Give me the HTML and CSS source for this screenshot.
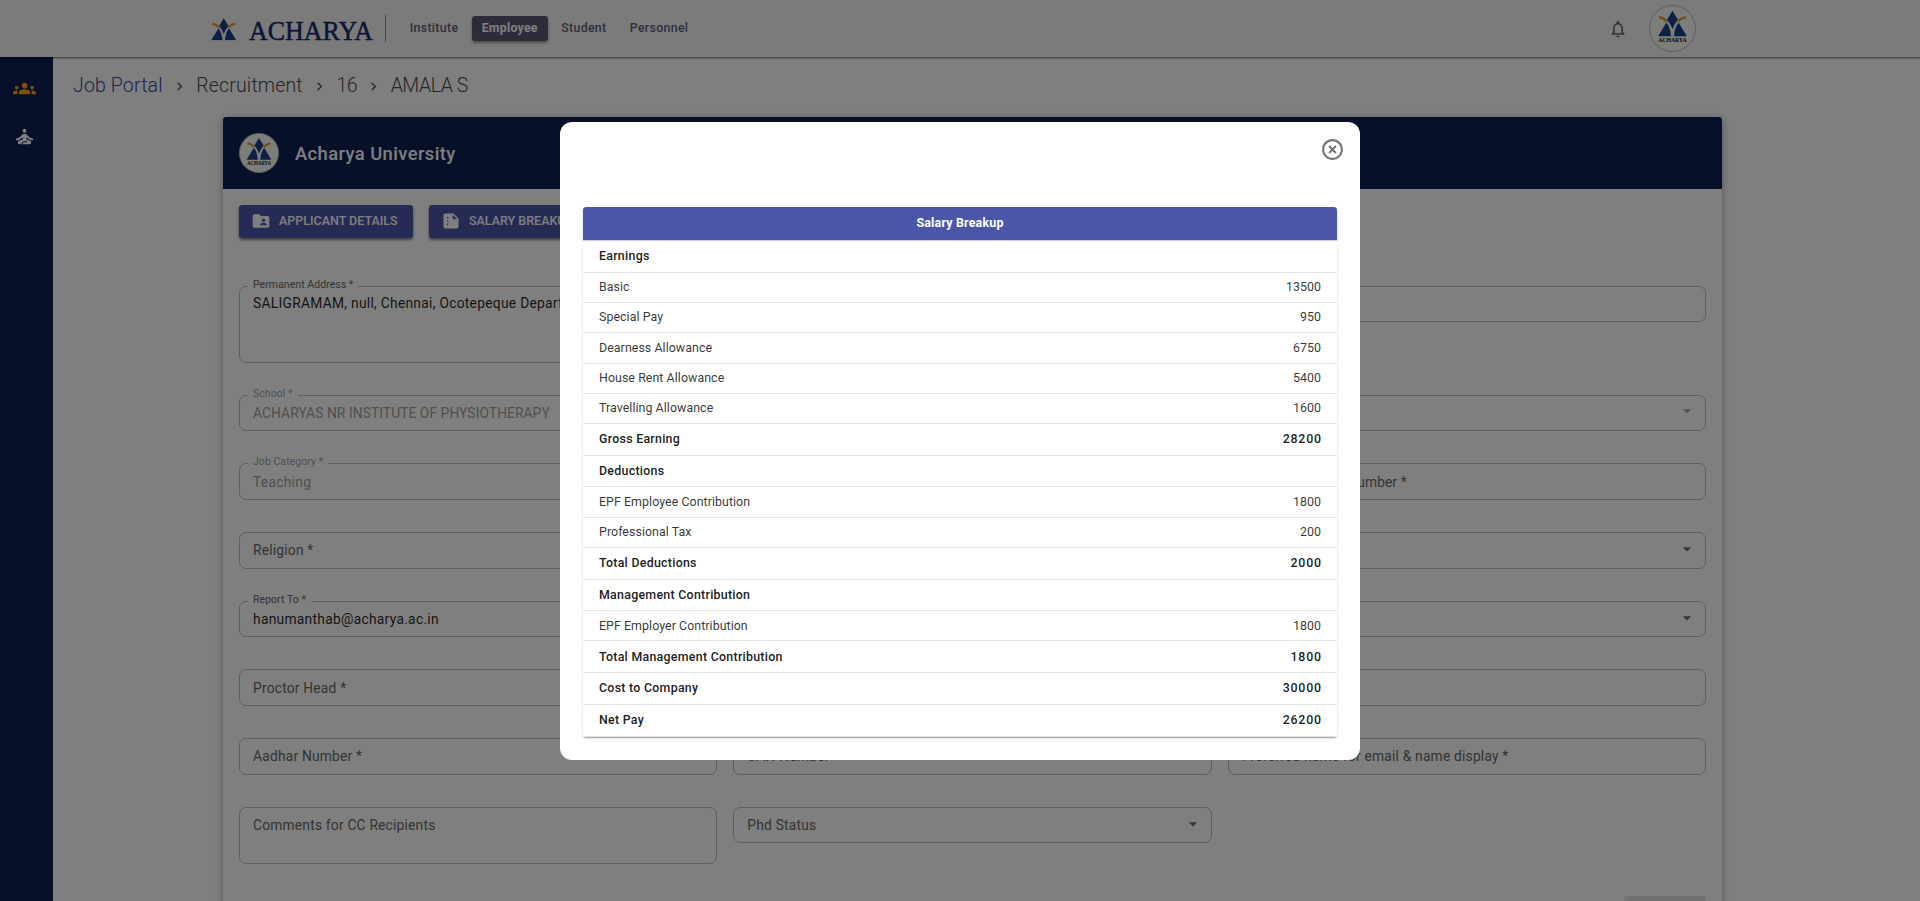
FILE: index.html
```html
<!DOCTYPE html>
<html lang="en">
<head>
<meta charset="utf-8">
<title>Acharya - Job Portal</title>
<link rel="stylesheet" href="styles.css">
</head>
<body>
<svg class="defs" width="0" height="0" aria-hidden="true">
  <symbol id="emblem" viewBox="9 5.6 29 26">
    <path class="em-blue" d="M23.5 5.8 29 14.8Q25.6 18.600 23.500 24Q21.400 18.600 18 14.800ZM17.400 17.400Q21.500 22.500 22 31.400H9ZM29.600 17.400Q25.500 22.500 25 31.400H38Z"/>
    <path class="em-gold" d="M10 12.400Q14.500 12.600 17.800 16.400M37 12.400Q32.500 12.600 29.200 16.400"/>
  </symbol>
  <symbol id="caret" viewBox="0 0 24 24"><path d="m7 10 5 5 5-5z"/></symbol>
</svg>

<header class="topbar">
  <div class="brand">
    <svg class="brand-mark" viewBox="9 5.600 29 26"><use href="#emblem" x="9" y="5.600" width="29" height="26"/></svg>
    <svg class="brand-word" viewBox="0 0 124 26"><text x="0" y="20.500" textLength="124" lengthAdjust="spacingAndGlyphs">ACHARYA</text></svg>
  </div>
  <nav class="topnav">
    <a class="nav-institute">Institute</a>
    <a class="nav-employee active">Employee</a>
    <a class="nav-student">Student</a>
    <a class="nav-personnel">Personnel</a>
  </nav>
  <div class="account">
    <svg class="bell" viewBox="0 0 24 24"><path d="M12 22c1.100 0 2-.9 2-2h-4c0 1.100.9 2 2 2m6-6v-5c0-3.070-1.630-5.640-4.500-6.320V4c0-.83-.67-1.500-1.500-1.500s-1.500.67-1.500 1.500v.68C7.640 5.360 6 7.920 6 11v5l-2 2v1h16v-1zm-2 1H8v-6c0-2.480 1.510-4.500 4-4.500s4 2.020 4 4.500z"/></svg>
    <svg class="avatar" viewBox="0 0 47 47">
      <circle class="seal-disc" cx="23.500" cy="23.500" r="23"/>
      <use href="#emblem" x="9" y="5.600" width="29" height="26"/>
      <text class="seal-text" x="9.300" y="37.400" textLength="28.400" lengthAdjust="spacingAndGlyphs">ACHARYA</text>
    </svg>
  </div>
</header>

<div class="layout">
  <aside class="sidebar">
    <svg class="side-icon current" viewBox="0 0 24 24"><path d="M12 12.750c1.630 0 3.070.39 4.240.9 1.080.48 1.760 1.560 1.760 2.730V18H6v-1.610c0-1.180.68-2.260 1.760-2.730 1.170-.52 2.610-.91 4.240-.91M4 13c1.100 0 2-.9 2-2s-.9-2-2-2-2 .9-2 2 .9 2 2 2m1.130 1.100c-.37-.06-.74-.1-1.130-.1-.99 0-1.930.21-2.780.58C.48 14.900 0 15.620 0 16.430V18h4.500v-1.610c0-.83.23-1.610.63-2.290M20 13c1.100 0 2-.9 2-2s-.9-2-2-2-2 .9-2 2 .9 2 2 2m4 3.430c0-.81-.48-1.530-1.220-1.850-.85-.37-1.790-.58-2.780-.58-.39 0-.76.04-1.130.1.4.68.63 1.460.63 2.290V18H24zM12 6c1.660 0 3 1.340 3 3s-1.340 3-3 3-3-1.340-3-3 1.340-3 3-3"/></svg>
    <svg class="side-icon" viewBox="0 0 24 24"><circle cx="12" cy="6" r="2"/><path d="M21 16v-2c-2.240 0-4.160-.96-5.600-2.680l-1.340-1.600c-.38-.46-.94-.72-1.530-.72h-1.050c-.6 0-1.160.26-1.540.72l-1.340 1.600C7.160 13.040 5.240 14 3 14v2c2.770 0 5.190-1.170 7-3.250V15l-3.880 1.550c-.67.27-1.120.93-1.120 1.660C5 19.200 5.800 20 6.790 20H9v-.5c0-1.380 1.120-2.500 2.500-2.500h3c.28 0 .5.22.5.5s-.22.5-.5.5h-3c-.83 0-1.500.67-1.500 1.500v.5h7.210c.99 0 1.790-.8 1.790-1.790 0-.73-.45-1.390-1.120-1.660L14 15v-2.250c1.810 2.080 4.230 3.250 7 3.250"/></svg>
  </aside>

  <main class="content">
    <nav class="crumbs">
      <a class="crumb-link">Job Portal</a>
      <svg class="chev" viewBox="0 0 24 24"><path d="M10 6 8.590 7.410 13.170 12l-4.580 4.590L10 18l6-6z"/></svg>
      <span>Recruitment</span>
      <svg class="chev" viewBox="0 0 24 24"><path d="M10 6 8.590 7.410 13.170 12l-4.580 4.590L10 18l6-6z"/></svg>
      <span class="crumb-id">16</span>
      <svg class="chev" viewBox="0 0 24 24"><path d="M10 6 8.590 7.410 13.170 12l-4.580 4.590L10 18l6-6z"/></svg>
      <span class="crumb-name">AMALA S</span>
    </nav>

    <section class="card">
      <div class="card-head">
        <svg class="card-seal" viewBox="0 0 47 47">
          <circle class="seal-disc" cx="23.500" cy="23.500" r="23"/>
          <use href="#emblem" x="9" y="5.600" width="29" height="26"/>
          <text class="seal-text" x="9.300" y="37.400" textLength="28.400" lengthAdjust="spacingAndGlyphs">ACHARYA</text>
        </svg>
        <h1>Acharya University</h1>
      </div>
      <div class="card-body">
        <div class="actions">
          <button class="btn btn-details"><svg viewBox="0 0 24 24"><path d="M20 6h-8l-2-2H4c-1.100 0-1.990.9-1.990 2L2 18c0 1.100.9 2 2 2h16c1.100 0 2-.9 2-2V8c0-1.100-.9-2-2-2m-5 3c1.100 0 2 .9 2 2s-.9 2-2 2-2-.9-2-2 .9-2 2-2m4 8h-8v-1c0-1.330 2.670-2 4-2s4 .67 4 2z"/></svg>APPLICANT DETAILS</button>
          <button class="btn btn-salary"><svg viewBox="0 0 24 24"><path d="M15 3H5c-1.100 0-1.990.9-1.990 2L3 19c0 1.100.89 2 1.990 2H19c1.100 0 2-.9 2-2V9zM8 17c-.55 0-1-.45-1-1s.45-1 1-1 1 .45 1 1-.45 1-1 1m0-4c-.55 0-1-.45-1-1s.45-1 1-1 1 .45 1 1-.45 1-1 1m0-4c-.55 0-1-.45-1-1s.45-1 1-1 1 .45 1 1-.45 1-1 1m6 1V4.500l5.500 5.500z"/></svg>SALARY BREAKUP</button>
        </div>

        <form class="fields">
          <div class="field tall"><label>Permanent Address *</label><span class="value">SALIGRAMAM, null, Chennai, Ocotepeque Department</span></div>
          <div class="field tall"></div>
          <div class="field"></div>

          <div class="field off"><label>School *</label><span class="value caps">ACHARYAS NR INSTITUTE OF PHYSIOTHERAPY</span></div>
          <div class="field off"></div>
          <div class="field off"><svg class="caret"><use href="#caret"/></svg></div>

          <div class="field off"><label>Job Category *</label><span class="value">Teaching</span></div>
          <div class="field"></div>
          <div class="field"><span class="hint snug">Alternate Mobile Number *</span></div>

          <div class="field"><span class="hint">Religion *</span></div>
          <div class="field"></div>
          <div class="field"><svg class="caret"><use href="#caret"/></svg></div>

          <div class="field"><label>Report To *</label><span class="value">hanumanthab@acharya.ac.in</span></div>
          <div class="field"></div>
          <div class="field"><svg class="caret"><use href="#caret"/></svg></div>

          <div class="field"><span class="hint">Proctor Head *</span></div>
          <div class="field"></div>
          <div class="field"></div>

          <div class="field"><span class="hint">Aadhar Number *</span></div>
          <div class="field"><span class="hint">UAN Number</span></div>
          <div class="field"><span class="hint">Preferred name for email &amp; name display *</span></div>

          <div class="field comments"><span class="hint">Comments for CC Recipients</span></div>
          <div class="field"><span class="hint">Phd Status</span><svg class="caret"><use href="#caret"/></svg></div>
        </form>
        <div class="submit-row"><button class="submit" disabled></button></div>
      </div>
    </section>
  </main>
</div>

<div class="backdrop">
  <div class="modal" role="dialog">
    <div class="modal-head">
      <svg class="close" viewBox="0 0 24 24"><path d="M14.590 8 12 10.590 9.410 8 8 9.410 10.590 12 8 14.590 9.410 16 12 13.410 14.590 16 16 14.590 13.410 12 16 9.410zM12 2C6.470 2 2 6.470 2 12s4.470 10 10 10 10-4.470 10-10S17.530 2 12 2m0 18c-4.410 0-8-3.590-8-8s3.590-8 8-8 8 3.590 8 8-3.590 8-8 8"/></svg>
    </div>
    <div class="sheet">
      <div class="sheet-title">Salary Breakup</div>
      <div class="line total"><span>Earnings</span></div>
      <div class="line"><span>Basic</span><span>13500</span></div>
      <div class="line"><span>Special Pay</span><span>950</span></div>
      <div class="line"><span>Dearness Allowance</span><span>6750</span></div>
      <div class="line"><span>House Rent Allowance</span><span>5400</span></div>
      <div class="line"><span>Travelling Allowance</span><span>1600</span></div>
      <div class="line total"><span>Gross Earning</span><span class="sum">28200</span></div>
      <div class="line total"><span>Deductions</span></div>
      <div class="line"><span>EPF Employee Contribution</span><span>1800</span></div>
      <div class="line"><span>Professional Tax</span><span>200</span></div>
      <div class="line total"><span>Total Deductions</span><span class="sum">2000</span></div>
      <div class="line total"><span>Management Contribution</span></div>
      <div class="line"><span>EPF Employer Contribution</span><span>1800</span></div>
      <div class="line total"><span>Total Management Contribution</span><span class="sum">1800</span></div>
      <div class="line total"><span>Cost to Company</span><span class="sum">30000</span></div>
      <div class="line total"><span>Net Pay</span><span class="sum">26200</span></div>
    </div>
  </div>
</div>
</body>
</html>
```
FILE: styles.css
```css
* { box-sizing: border-box; }
body {
  margin: 0;
  height: 901px;
  overflow: hidden;
  background: #fff;
  color: rgba(0, 0, 0, .87);
  font-family: Roboto, "Liberation Sans", sans-serif;
  font-size: 13.8px;
}
.defs { position: absolute; }
.em-blue { fill: #1c3f8f; }
.em-gold { fill: none; stroke: #e8992a; stroke-width: 2.4; }
.brand-mark { --mark: #1b2a6b; }
.seal-disc { fill: #fbfaf5; stroke: #bdbdbd; stroke-width: 1; }
.seal-text { font: 700 6.6px "Liberation Serif", serif; fill: #111; }

/* top bar */
.topbar {
  position: relative;
  z-index: 2;
  display: flex;
  height: 57px;
  padding: 0 224px 0 211px;
  background: #f7f7f7;
  box-shadow: 0 1px 2px rgba(0, 0, 0, .6);
}
.brand {
  display: flex;
  width: 175px;
  height: 27px;
  margin-top: 15px;
  border-right: 1px solid #8f8f8f;
}
.brand-mark { width: 25.5px; height: 22.5px; margin-top: 3px; }
.brand-mark use { fill: var(--mark); }
.brand-word { width: 124px; height: 26px; margin: 4px 0 0 12.5px; overflow: visible; }
.brand-word text {
  font: 400 26.500px "Liberation Serif", serif;
  fill: #1b2a6b;
  stroke: #1b2a6b;
  stroke-width: .5;
}
.topnav { display: flex; gap: 2.700px; height: 25px; margin: 16px auto 0 13px; }
.topnav a {
  line-height: 24px;
  text-align: center;
  font-size: 12.3px;
  font-weight: 500;
  letter-spacing: .35px;
  color: #5f5c78;
  border-radius: 3.200px;
}
.nav-institute { width: 70px; }
.nav-employee { width: 76px; }
.nav-student { width: 67px; }
.nav-personnel { width: 78px; }
.topnav a.active {
  color: #fff;
  font-weight: 700;
  letter-spacing: .25px;
  background: #5b5876;
  box-shadow: 0 2px 3px rgba(0, 0, 0, .4);
}
.account { display: flex; align-items: center; gap: 21px; }
.bell { width: 20px; height: 20px; fill: #666; }
.avatar { width: 47px; height: 47px; }

/* page frame */
.layout { display: flex; height: 844px; }
.sidebar {
  display: flex;
  flex-direction: column;
  gap: 25px;
  width: 53px;
  padding: 20px 0 0 13px;
  background: #0f2052;
}
.side-icon { width: 23px; height: 23px; fill: #fff; }
.side-icon.current { fill: #f9a011; }
.content { flex: 1; padding-left: 20px; }
.crumbs {
  display: flex;
  align-items: center;
  height: 24px;
  margin: 16px 0 20px;
  font-size: 19.500px;
  font-weight: 300;
  letter-spacing: .15px;
  color: #4a4a4a;
}
.crumb-link { color: #3a479f; }
.crumb-id { letter-spacing: -.5px; }
.crumb-name { letter-spacing: -.45px; }
.chev { width: 17px; height: 17px; margin: 3px 8.300px 0; fill: #555; }

/* card */
.card {
  width: 1499px;
  height: 820px;
  margin-left: 150px;
  border-radius: 3.200px;
  overflow: hidden;
  box-shadow: 0 2px 8px rgba(0, 0, 0, .35);
}
.card-head {
  display: flex;
  align-items: center;
  gap: 16px;
  height: 72px;
  padding: 0 16px;
  background: #0f2052;
  color: #fff;
}
.card-seal { width: 40px; height: 40px; }
.card-head h1 { margin: 0; font-size: 18.400px; font-weight: 500; letter-spacing: .4px; }
.card-body { padding: 16px; }
.actions { display: flex; gap: 16px; }
.btn {
  display: flex;
  align-items: center;
  gap: 8px;
  height: 33px;
  padding: 0 12px 2px;
  border: 0;
  border-radius: 3.200px;
  background: #4a57a9;
  color: #fff;
  font: 500 12.500px Roboto, sans-serif;
  white-space: nowrap;
  box-shadow: 0 2px 3px rgba(0, 0, 0, .5);
}
.btn svg { width: 20px; height: 20px; margin-top: 1px; fill: #fff; }
.btn-details { width: 174px; }
.btn-salary { width: 160px; }

.fields {
  display: grid;
  grid-template-columns: repeat(3, 1fr);
  gap: 32px 16px;
  align-items: start;
  margin-top: 47.600px;
}
.field {
  position: relative;
  display: flex;
  align-items: center;
  height: 36.700px;
  padding: 0 13px;
  border: 1px solid #bdbdbd;
  border-radius: 7px;
  white-space: nowrap;
}
.field.tall { height: 77px; align-items: flex-start; padding-top: 8px; }
.field.comments { height: 57px; align-items: flex-start; padding-top: 9px; }
.field label {
  position: absolute;
  left: 8px;
  top: -9px;
  padding: 0 5px;
  background: #fff;
  font-size: 10.500px;
  line-height: 14px;
  letter-spacing: .05px;
  color: #666;
}
.value { letter-spacing: .28px; }
.value.caps { letter-spacing: .07px; }
.hint { color: #666; letter-spacing: .2px; }
.hint.snug { letter-spacing: .08px; }
.field.off .value, .field.off label { color: #a0a0a0; }
.caret { width: 20px; height: 20px; margin: -3px -5px 0 auto; fill: #6a6a6a; }
.off .caret { fill: #a3a3a3; }
.submit-row { display: flex; justify-content: flex-end; margin-top: 32px; }
.submit { width: 82px; height: 33px; border: 0; border-radius: 4px; background: #e0e0e0; }

/* dialog */
.backdrop {
  position: fixed;
  inset: 0;
  z-index: 10;
  display: flex;
  justify-content: center;
  align-items: flex-start;
  padding-top: 122.400px;
  background: rgba(0, 0, 0, .5);
}
.modal {
  width: 800px;
  height: 637.800px;
  padding: 0 23px;
  background: #fff;
  border-radius: 12px;
}
.modal-head { display: flex; justify-content: flex-end; height: 85px; padding: 14.500px 0 0; margin-right: -7.500px; }
.close { width: 25px; height: 25px; fill: #757575; }
.sheet {
  border-radius: 3.200px;
  overflow: hidden;
  font-size: 12.400px;
  letter-spacing: .06px;
  box-shadow: 0 2px 1px -1px rgba(0, 0, 0, .2), 0 1px 1px rgba(0, 0, 0, .14), 0 1px 3px rgba(0, 0, 0, .12);
}
.sheet-title {
  height: 33.800px;
  line-height: 32px;
  background: #4a57a9;
  border-bottom: 1px solid #c9cce4;
  color: #fff;
  font-weight: 700;
  letter-spacing: .2px;
  text-align: center;
}
.line {
  display: flex;
  justify-content: space-between;
  align-items: center;
  height: 30.200px;
  padding: 0 16px 1.600px;
  border-bottom: 1px solid #e4e4e4;
  color: rgba(0, 0, 0, .8);
}
.line.total { height: 31.750px; font-weight: 500; letter-spacing: .27px; color: rgba(0, 0, 0, .9); }
.line .sum { letter-spacing: .75px; margin-right: -.750px; }
```
